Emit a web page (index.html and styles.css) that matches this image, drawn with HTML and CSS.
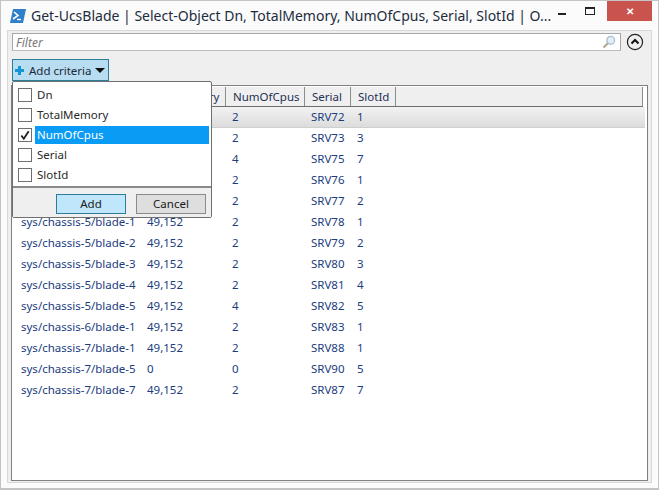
FILE: index.html
```html
<!DOCTYPE html>
<html lang="en">
<head>
<meta charset="utf-8">
<title>Get-UcsBlade</title>
<link rel="stylesheet" href="styles.css">
</head>
<body>
<div class="window">
  <header class="titlebar">
    <svg class="app-icon" width="16" height="14" viewBox="0 0 16 14"><path d="M3 0H16L13 14H0Z" fill="#2f7fc9"/><path d="M4 3L8 6.5L3 10" fill="none" stroke="#fff" stroke-width="1.6"/><path d="M7 10.5H11" stroke="#fff" stroke-width="1.4"/></svg>
    <div class="title">Get-UcsBlade | Select-Object Dn, TotalMemory, NumOfCpus, Serial, SlotId | O...</div>
    <div class="controls">
      <span class="ctl"><span class="min"></span></span>
      <span class="ctl"><span class="max"></span></span>
      <span class="close">✕</span>
    </div>
  </header>
  <main class="panel">
    <div class="filter-row">
      <div class="filter"><span class="placeholder">Filter</span>
        <svg class="search" width="14" height="14" viewBox="0 0 14 14"><circle cx="8.7" cy="5.3" r="3.9" fill="#e3eef8" stroke="#a9bdcd" stroke-width="1.3"/><path d="M5.8 8.2L1.5 12.5" stroke="#b0a690" stroke-width="2"/></svg>
      </div>
      <svg class="collapse" width="18" height="18" viewBox="0 0 18 18"><circle cx="9" cy="9" r="7.6" fill="none" stroke="#222" stroke-width="1.2"/><path d="M5.5 10.5L9 7L12.5 10.5" fill="none" stroke="#111" stroke-width="2"/></svg>
    </div>
    <div class="criteria-row">
      <button class="add-criteria"><span class="plus"></span><span class="add-label">Add criteria</span><span class="caret"></span></button>
    </div>
    <section class="list">
      <div class="cols head">
        <div class="hc">Dn</div><div class="hc">TotalMemory</div><div class="hc">NumOfCpus</div><div class="hc">Serial</div><div class="hc">SlotId</div><div class="hc fill"></div>
      </div>
      <div class="cols row selected"><div>sys/chassis-1/blade-1</div><div>49,152</div><div>2</div><div>SRV72</div><div>1</div></div>
      <div class="cols row"><div>sys/chassis-1/blade-3</div><div>49,152</div><div>2</div><div>SRV73</div><div>3</div></div>
      <div class="cols row"><div>sys/chassis-1/blade-7</div><div>49,152</div><div>4</div><div>SRV75</div><div>7</div></div>
      <div class="cols row"><div>sys/chassis-4/blade-1</div><div>49,152</div><div>2</div><div>SRV76</div><div>1</div></div>
      <div class="cols row"><div>sys/chassis-4/blade-2</div><div>49,152</div><div>2</div><div>SRV77</div><div>2</div></div>
      <div class="cols row"><div>sys/chassis-5/blade-1</div><div>49,152</div><div>2</div><div>SRV78</div><div>1</div></div>
      <div class="cols row"><div>sys/chassis-5/blade-2</div><div>49,152</div><div>2</div><div>SRV79</div><div>2</div></div>
      <div class="cols row"><div>sys/chassis-5/blade-3</div><div>49,152</div><div>2</div><div>SRV80</div><div>3</div></div>
      <div class="cols row"><div>sys/chassis-5/blade-4</div><div>49,152</div><div>2</div><div>SRV81</div><div>4</div></div>
      <div class="cols row"><div>sys/chassis-5/blade-5</div><div>49,152</div><div>4</div><div>SRV82</div><div>5</div></div>
      <div class="cols row"><div>sys/chassis-6/blade-1</div><div>49,152</div><div>2</div><div>SRV83</div><div>1</div></div>
      <div class="cols row"><div>sys/chassis-7/blade-1</div><div>49,152</div><div>2</div><div>SRV88</div><div>1</div></div>
      <div class="cols row"><div>sys/chassis-7/blade-5</div><div>0</div><div>0</div><div>SRV90</div><div>5</div></div>
      <div class="cols row"><div>sys/chassis-7/blade-7</div><div>49,152</div><div>2</div><div>SRV87</div><div>7</div></div>
    </section>
    <div class="popup">
      <div class="options">
        <label class="opt"><span class="box"></span><span class="name">Dn</span></label>
        <label class="opt"><span class="box"></span><span class="name">TotalMemory</span></label>
        <label class="opt"><span class="box"><svg width="13" height="13" viewBox="0 0 13 13"><path d="M2.5 6.5L5.2 10L10.5 1.8" fill="none" stroke="#222" stroke-width="2"/></svg></span><span class="name on">NumOfCpus</span></label>
        <label class="opt"><span class="box"></span><span class="name">Serial</span></label>
        <label class="opt"><span class="box"></span><span class="name">SlotId</span></label>
      </div>
      <div class="actions">
        <button class="btn primary">Add</button>
        <button class="btn">Cancel</button>
      </div>
    </div>
  </main>
</div>
</body>
</html>
```
FILE: styles.css
```css
* { box-sizing: border-box; }
html, body { margin: 0; padding: 0; height: 100%; }
body { background: #fff; font-family: "Noto Sans", "Open Sans", sans-serif; font-size: 11.5px; color: #1a1a1a; overflow: hidden; }
.window { width: 659px; height: 490px; background: #fbfbfb; border: 1px solid #c4c4c4; border-bottom-width: 2px; display: flex; flex-direction: column; padding: 0 6px 5px 6px; }
.titlebar { height: 29px; display: flex; align-items: center; flex: none; position: relative; }
.app-icon { margin: 0 5px 0 3px; flex: none; }
.title { font-size: 14px; color: #1d2c3d; white-space: nowrap; flex: 1; }
.controls { position: absolute; right: 0; top: 0; display: flex; }
.ctl { width: 28px; height: 20px; display: flex; align-items: center; justify-content: center; }
.min { width: 8px; height: 2px; background: #222; margin-top: 5px; }
.max { width: 10px; height: 8px; border: 1px solid #222; border-top-width: 2px; }
.close { width: 45px; height: 20px; background: #c9544d; color: #fff; font-size: 10px; font-weight: bold; display: flex; align-items: center; justify-content: center; margin-left: 3px; }
.panel { flex: 1; position: relative; background: #efefef; border: 1px solid #d8d8d8; padding: 2px 3px 1px 4px; display: flex; flex-direction: column; min-height: 0; }
.filter-row { display: flex; align-items: center; gap: 5px; height: 18px; flex: none; }
.filter { width: 609px; height: 18px; background: #fff; border: 1px solid #a8a8a8; border-bottom-color: #bdbdbd; display: flex; align-items: center; justify-content: space-between; padding: 0 4px 0 3px; flex: none; }
.placeholder { font-style: italic; color: #777; font-size: 12px; }
.collapse { flex: none; }
.criteria-row { display: flex; margin-top: 8px; flex: none; }
.add-criteria { width: 97px; height: 22px; background: #b8dcf0; border: 1px solid #2b7d99; font: inherit; color: #1a2a3a; display: flex; align-items: center; padding: 0 0 0 2px; }
.add-label { white-space: nowrap; }
.plus { width: 9px; height: 9px; margin-right: 5px; background: linear-gradient(#1694d6,#1694d6) center/3px 9px no-repeat, linear-gradient(#1694d6,#1694d6) center/9px 3px no-repeat; flex: none; }
.caret { width: 0; height: 0; border: 5px solid transparent; border-top: 5px solid #111; border-bottom: 0; margin-left: 3px; flex: none; }
.list { flex: 1; margin-top: 4px; margin-left: -1px; background: #fff; border: 1px solid #7f7f86; min-height: 0; overflow: hidden; padding-top: 1px; }
.cols { display: grid; grid-template-columns: 129px 85px 79px 46px 45px 1fr; }
.head { height: 20px; background: #efefef; border-bottom: 1px solid #6e6e6e; margin-right: 4px; }
.hc { border-right: 1px solid #8d8d8d; padding-left: 7px; color: #1f2f55; line-height: 19px; }
.row { height: 21px; line-height: 20px; color: #1b3c80; }
.row > div { padding-left: 6px; white-space: nowrap; }
.row > div:first-child { padding-left: 9px; }
.selected { background: linear-gradient(#f2f2f2, #dcdcdc); border-bottom: 1px solid #cfcfcf; margin-right: 2px; }
.popup { position: absolute; left: 4px; top: 50px; width: 200px; height: 137px; background: #fff; border: 1px solid #6f6f6f; border-radius: 2px; display: flex; flex-direction: column; z-index: 2; }
.options { flex: 1; padding: 3px 2px 0 5px; display: flex; flex-direction: column; }
.opt { display: flex; align-items: center; height: 20px; }
.box { width: 14px; height: 14px; border: 1px solid #6f6f6f; background: #fff; flex: none; margin-right: 3px; display: flex; align-items: center; justify-content: center; }
.name { flex: 1; height: 18px; line-height: 18px; padding-left: 2px; color: #2a2a2a; }
.name.on { background: #0a9bf5; color: #fff; }
.actions { height: 31px; flex: none; background: #efefef; border-top: 2px solid #8a8a8a; display: flex; justify-content: flex-end; gap: 10px; padding: 6px 5px 0 0; }
.btn { width: 70px; height: 20px; font: inherit; color: #1a1a1a; background: #dedede; border: 1px solid #8a8a8a; padding: 0; line-height: 16px; }
.btn.primary { background: #bfe6fb; border-color: #2b7d99; }
```
